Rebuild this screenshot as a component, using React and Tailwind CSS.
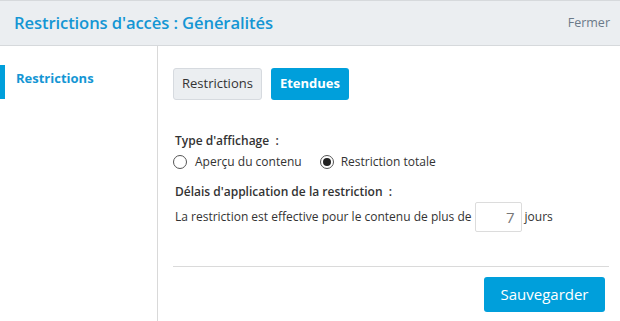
import { useState } from 'react';

export default function App() {
  const [tab, setTab] = useState('etendues');
  const [mode, setMode] = useState('totale');
  const [days, setDays] = useState('7');

  return (
    <div className="w-[620px] h-[321px] bg-white flex flex-col overflow-hidden text-[#333] font-['Open_Sans',sans-serif]">
      {/* Header */}
      <header className="h-[46px] shrink-0 flex items-center justify-between pl-[14px] pr-[10px] bg-[#ebeef1] border-t border-b border-[#d6d9dc]">
        <h1 className="text-[16.6px] font-semibold text-[#1496d4] tracking-[-0.1px]">Restrictions d'accès : Généralités</h1>
        <button className="text-[12.5px] text-[#6b7a89]">Fermer</button>
      </header>

      <div className="flex flex-1 min-h-0">
        {/* Sidebar */}
        <aside className="w-[158px] shrink-0 border-r border-[#d9d9d9] pt-[19px]">
          <div className="h-[34px] flex items-start border-l-[5px] border-[#009fdb] pl-[11px] pt-[4px]">
            <span className="text-[13px] font-bold text-[#1496d4]">Restrictions</span>
          </div>
        </aside>

        {/* Main */}
        <main className="flex-1 pl-[15px] pr-[11px] pt-[22px] flex flex-col">
          <div className="flex gap-[9px]">
            <button
              onClick={() => setTab('restrictions')}
              className={tab === 'restrictions'
                ? 'h-[32px] px-[8px] rounded-[3px] bg-[#009fdb] text-white text-[13px] font-bold'
                : 'h-[32px] px-[8px] rounded-[3px] bg-[#ebeef1] border border-[#d6dadf] text-[13px] text-[#333]'}
            >
              Restrictions
            </button>
            <button
              onClick={() => setTab('etendues')}
              className={tab === 'etendues'
                ? 'h-[32px] px-[9px] rounded-[3px] bg-[#009fdb] text-white text-[13px] font-bold'
                : 'h-[32px] px-[9px] rounded-[3px] bg-[#ebeef1] border border-[#d6dadf] text-[13px] text-[#333]'}
            >
              Etendues
            </button>
          </div>

          <div className="pl-[2px] pt-[32px] text-[12px]">
            <div className="font-semibold leading-[18px]">Type d'affichage&nbsp;&nbsp;:</div>
            <div className="flex items-center gap-[18px] h-[22px] -ml-[2px] mt-[1px]">
              <label className="flex items-center gap-[8px] cursor-pointer">
                <Radio checked={mode === 'apercu'} onClick={() => setMode('apercu')} />
                <span>Aperçu du contenu</span>
              </label>
              <label className="flex items-center gap-[7px] cursor-pointer">
                <Radio checked={mode === 'totale'} onClick={() => setMode('totale')} />
                <span>Restriction totale</span>
              </label>
            </div>
            <div className="font-semibold leading-[18px] mt-[10px]">Délais d'application de la restriction&nbsp;&nbsp;:</div>
            <div className="flex items-center gap-[3px] mt-[1px]">
              <span>La restriction est effective pour le contenu de plus de</span>
              <input
                value={days}
                onChange={e => setDays(e.target.value)}
                className="w-[47px] h-[30px] border border-[#dcdcdc] rounded-[2px] text-right pr-[6px] text-[15px] text-[#777] outline-none"
              />
              <span>jours</span>
            </div>
          </div>

          <div className="mt-[34px] border-t border-[#dadada]" />

          <div className="flex justify-end pt-[10px] pr-[4px]">
            <button className="w-[121px] h-[35px] rounded-[3px] bg-[#009fdb] text-white text-[15px]">Sauvegarder</button>
          </div>
        </main>
      </div>
    </div>
  );
}

function Radio({ checked, onClick }) {
  return (
    <span
      onClick={onClick}
      className="w-[14px] h-[14px] rounded-full border border-[#555] bg-white flex items-center justify-center shrink-0"
    >
      {checked && <span className="w-[8px] h-[8px] rounded-full bg-[#222]" />}
    </span>
  );
}
